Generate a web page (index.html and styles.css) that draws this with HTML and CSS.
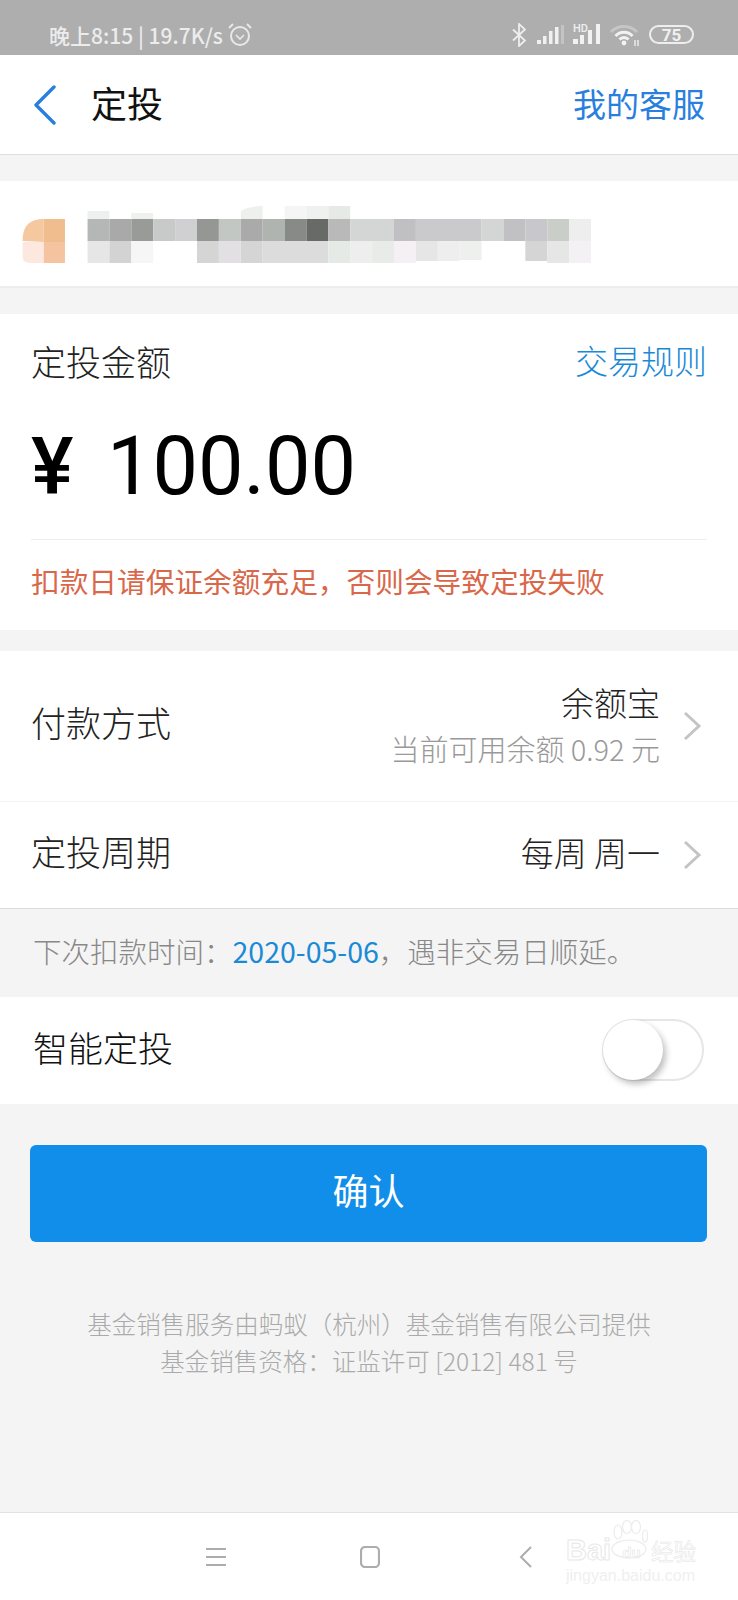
FILE: index.html
```html
<!DOCTYPE html>
<html lang="zh-CN">
<head>
  <meta charset="UTF-8">
  <meta name="viewport" content="width=device-width, initial-scale=1.0">
  <title>定投</title>
  <link rel="stylesheet" href="styles.css">
</head>
<body>
  <div class="page">

    <div class="status-bar">
      <div class="status-left">
        <span class="status-time">晚上8:15 | 19.7K/s</span>
        <svg class="alarm" width="24" height="25" viewBox="0 0 24 25" fill="none" stroke="#e8e8e8" stroke-width="2">
          <circle cx="12" cy="14" r="9"/>
          <path d="M8 13l4 4 4-4" stroke-width="1.6"/>
          <path d="M1 6l4-4M23 6l-4-4"/>
        </svg>
      </div>
      <div class="status-right">
        <svg class="bluetooth" width="14" height="24" viewBox="0 0 14 24" fill="none" stroke="#eeeeee" stroke-width="1.800">
          <path d="M1 6.500l12 11-6 5.500V1l6 5.500-12 11"/>
        </svg>
        <svg class="signal" width="27" height="20" viewBox="0 0 27 20" fill="#f0f0f0">
          <rect x="0" y="15" width="4" height="4"/>
          <rect x="6" y="11" width="3.500" height="8"/>
          <rect x="12" y="6" width="3.500" height="13"/>
          <rect x="18" y="2" width="3.500" height="17"/>
          <rect x="24" y="0" width="3" height="19" fill="#c4c4c4"/>
        </svg>
        <div class="hd-signal">
          <span class="hd">HD</span>
          <svg width="28" height="21" viewBox="0 0 28 21" fill="#f2f2f2">
            <rect x="0" y="15" width="5" height="5"/>
            <rect x="7" y="11" width="4" height="9"/>
            <rect x="15" y="6" width="4" height="14"/>
            <rect x="23" y="0" width="4" height="20"/>
          </svg>
        </div>
        <svg class="wifi" width="30" height="22" viewBox="0 0 30 22" fill="none" stroke-width="3">
          <path d="M1 8a18 18 0 0 1 26 0" stroke="#c6c6c6"/>
          <path d="M5.500 12a11.500 11.500 0 0 1 17 0" stroke="#f2f2f2"/>
          <path d="M9.500 15.500a6 6 0 0 1 9 0" stroke="#f2f2f2"/>
          <circle cx="14" cy="19" r="2.400" fill="#f2f2f2" stroke="none"/>
          <path d="M25 16v6M28 16v6" stroke="#eeeeee" stroke-width="1.400"/>
        </svg>
        <div class="battery"><span class="battery-num">75</span></div>
      </div>
    </div>

    <header class="app-bar">
      <div class="app-bar-left">
        <svg width="26" height="40" viewBox="0 0 26 40" fill="none" stroke="#2a7fde" stroke-width="3.400" stroke-linecap="round" stroke-linejoin="round">
          <path d="M22 2L4 20l18 18"/>
        </svg>
        <h1 class="page-title">定投</h1>
      </div>
      <a class="service-link">我的客服</a>
    </header>

    <section class="account-card">
      <svg width="591" height="64" viewBox="0 0 418.500 64" preserveAspectRatio="none">
        <path d="M16 40c0-12 3-22 15-22v23z" fill="#f5c8a0"/>
        <rect x="31" y="18" width="15" height="23" fill="#f0bd8e"/>
        <path d="M16 41h15v21H22q-6 0-6-6z" fill="#fde8df"/>
        <rect x="31" y="41" width="15" height="21" fill="#f4c4a0"/>
        <g>
          <rect x="62" y="10" width="15.500" height="8" fill="#edf0ee"/>
          <rect x="93" y="12" width="15.500" height="6" fill="#eef1ee"/>
          <path d="M170.500 18V10q4-4 15.500-5V18z" fill="#eef0ee"/>
          <rect x="201.500" y="5" width="15.500" height="13" fill="#f4f5f4"/>
          <rect x="217" y="5" width="15.500" height="13" fill="#eef1ef"/>
          <rect x="232.500" y="5" width="15.500" height="13" fill="#e6eae6"/>
        </g>
        <g>
          <rect x="62" y="18" width="15.500" height="22" fill="#b5b6b6"/>
          <rect x="77.500" y="18" width="15.500" height="22" fill="#a9a9aa"/>
          <rect x="93" y="18" width="15.500" height="22" fill="#999b99"/>
          <rect x="108.500" y="18" width="15.500" height="22" fill="#c8c9c9"/>
          <rect x="124" y="18" width="15.500" height="22" fill="#d0d0d2"/>
          <rect x="139.500" y="18" width="15.500" height="22" fill="#959795"/>
          <rect x="155" y="18" width="15.500" height="22" fill="#c3c7c3"/>
          <rect x="170.500" y="18" width="15.500" height="22" fill="#a9aaa9"/>
          <rect x="186" y="18" width="15.500" height="22" fill="#b0b4b0"/>
          <rect x="201.500" y="18" width="15.500" height="22" fill="#888a87"/>
          <rect x="217" y="18" width="15.500" height="22" fill="#676a66"/>
          <rect x="232.500" y="18" width="15.500" height="22" fill="#b8b9b8"/>
          <rect x="248" y="18" width="31" height="22" fill="#d4d5d5"/>
          <rect x="279" y="18" width="15.500" height="22" fill="#c0bfc2"/>
          <rect x="294.500" y="18" width="46.500" height="22" fill="#cac9cb"/>
          <rect x="341" y="18" width="15.500" height="22" fill="#d4d5d5"/>
          <rect x="356.500" y="18" width="15.500" height="22" fill="#c1c0c3"/>
          <rect x="372" y="18" width="15.500" height="22" fill="#c8c7cb"/>
          <rect x="387.500" y="18" width="15.500" height="22" fill="#c9cec9"/>
          <rect x="403" y="18" width="15.500" height="22" fill="#eeeeef"/>
        </g>
        <g>
          <rect x="62" y="40" width="15.500" height="22" fill="#e6e6e6"/>
          <rect x="77.500" y="40" width="15.500" height="22" fill="#d3d3d3"/>
          <rect x="93" y="40" width="15.500" height="22" fill="#f6f6f6"/>
          <rect x="139.500" y="40" width="15.500" height="22" fill="#d5d5d5"/>
          <rect x="155" y="40" width="15.500" height="22" fill="#e3e0e3"/>
          <rect x="170.500" y="40" width="15.500" height="22" fill="#d5d5d5"/>
          <rect x="186" y="40" width="46.500" height="22" fill="#dcdcdc"/>
          <rect x="232.500" y="40" width="15.500" height="22" fill="#e6eae6"/>
          <rect x="248" y="40" width="15.500" height="22" fill="#eeeeee"/>
          <rect x="263.500" y="40" width="15.500" height="22" fill="#e8ebe8"/>
          <rect x="279" y="40" width="15.500" height="22" fill="#f4f0f4"/>
          <rect x="294.500" y="40" width="15.500" height="20" fill="#e6e6e6"/>
          <rect x="310" y="40" width="15.500" height="20" fill="#eeeeee"/>
          <rect x="325.500" y="40" width="15.500" height="19" fill="#eef0ee"/>
          <rect x="372" y="40" width="15.500" height="20" fill="#d5d5d5"/>
          <rect x="387.500" y="40" width="15.500" height="22" fill="#e6e6e6"/>
          <rect x="403" y="40" width="15.500" height="22" fill="#f3f1f4"/>
        </g>
      </svg>
    </section>

    <section class="amount-card">
      <div class="amount-head">
        <span class="amount-label">定投金额</span>
        <a class="rules-link">交易规则</a>
      </div>
      <div class="amount-value">
        <span class="yen">¥</span>
        <span class="digits">100.00</span>
      </div>
      <p class="warning">扣款日请保证余额充足，否则会导致定投失败</p>
    </section>

    <section class="options">
      <div class="option option-pay">
        <span class="option-label">付款方式</span>
        <div class="option-side">
          <div class="option-values">
            <div class="option-main">余额宝</div>
            <div class="option-sub">当前可用余额 0.92 元</div>
          </div>
          <svg class="chevron" width="20" height="30" viewBox="0 0 20 30" fill="none" stroke="#c4c4c4" stroke-width="3">
            <path d="M3 2l14 13L3 28"/>
          </svg>
        </div>
      </div>
      <div class="option option-cycle">
        <span class="option-label">定投周期</span>
        <div class="option-side">
          <div class="option-main">每周 周一</div>
          <svg class="chevron" width="20" height="30" viewBox="0 0 20 30" fill="none" stroke="#c4c4c4" stroke-width="3">
            <path d="M3 2l14 13L3 28"/>
          </svg>
        </div>
      </div>
    </section>

    <p class="next-date">下次扣款时间：<span class="date">2020-05-06</span>，遇非交易日顺延。</p>

    <section class="smart-row">
      <span class="smart-label">智能定投</span>
      <div class="switch"><div class="switch-knob"></div></div>
    </section>

    <div class="submit-wrap">
      <button class="submit">确认</button>
    </div>

    <footer class="legal">
      <p>基金销售服务由蚂蚁（杭州）基金销售有限公司提供</p>
      <p>基金销售资格：证监许可 [2012] 481 号</p>
    </footer>

    <nav class="nav-bar">
      <svg class="nav-menu" width="20" height="18" viewBox="0 0 20 18" fill="none" stroke="#adadad" stroke-width="2">
        <path d="M0 1h20M0 9h20M0 17h20"/>
      </svg>
      <svg class="nav-home" width="20" height="22" viewBox="0 0 20 22" fill="none" stroke="#adadad" stroke-width="2.200">
        <rect x="1" y="1" width="18" height="20" rx="4"/>
      </svg>
      <svg class="nav-back" width="14" height="22" viewBox="0 0 14 22" fill="none" stroke="#adadad" stroke-width="2">
        <path d="M12 1L2 11l10 10"/>
      </svg>
    </nav>

    <div class="watermark">
      <svg class="paw" width="82" height="40" viewBox="0 0 82 40" fill="none" stroke="#ececec" stroke-width="1.200">
        <ellipse cx="52" cy="12" rx="4" ry="7"/>
        <ellipse cx="61" cy="7" rx="4.500" ry="6.500"/>
        <ellipse cx="70" cy="7" rx="4.500" ry="6.500"/>
        <ellipse cx="79" cy="16" rx="2.500" ry="6"/>
        <ellipse cx="63" cy="29" rx="17" ry="9"/>
      </svg>
      <div class="wm-top"><span class="wm-bai">Bai</span><span class="wm-du">du</span><span class="wm-cn">经验</span></div>
      <div class="wm-url">jingyan.baidu.com</div>
    </div>

  </div>
</body>
</html>
```

FILE: styles.css
```css
* {
  box-sizing: border-box;
}

body {
  margin: 0;
  background-color: #f4f4f4;
  font-family: "Noto Sans CJK SC", "Noto Sans", sans-serif;
  font-weight: 300;
  color: #222;
}

p,
h1 {
  margin: 0;
  font-weight: 300;
}

.page {
  position: relative;
  width: 738px;
  height: 1600px;
  display: flex;
  flex-direction: column;
  overflow: hidden;
}

/* status bar */
.status-bar {
  height: 55px;
  flex: none;
  background-color: #aeaeae;
  display: flex;
  justify-content: space-between;
  align-items: center;
  padding: 14px 44px 0 49px;
}

.status-left,
.status-right {
  display: flex;
  align-items: center;
}

.status-time {
  font-size: 21px;
  font-weight: 500;
  color: #ececec;
}

.alarm {
  margin-left: 5px;
}

.status-right {
  gap: 9px;
}

.bluetooth {
  margin-right: 2px;
}

.hd-signal {
  position: relative;
  height: 21px;
}

.hd-signal svg {
  display: block;
}

.hd {
  position: absolute;
  left: 0;
  top: -1px;
  font-family: "Roboto", sans-serif;
  font-weight: 500;
  font-size: 11px;
  line-height: 11px;
  color: #eeeeee;
}

.battery {
  width: 45px;
  height: 19px;
  border: 2px solid #eeeeee;
  border-radius: 10px;
  display: flex;
  align-items: center;
  justify-content: center;
}

.battery-num {
  font-family: "Roboto", sans-serif;
  font-size: 17px;
  font-weight: 700;
  color: #f0f0f0;
}

/* top bar */
.app-bar {
  height: 100px;
  flex: none;
  background-color: #fff;
  border-bottom: 1px solid #dedede;
  display: flex;
  justify-content: space-between;
  align-items: center;
  padding: 0 33px 0 32px;
}

.app-bar-left {
  display: flex;
  align-items: center;
  gap: 33px;
}

.page-title {
  font-size: 36px;
  font-weight: 400;
  line-height: 50px;
  padding-bottom: 6px;
  color: #111;
}

.service-link {
  font-size: 33px;
  font-weight: 400;
  padding-bottom: 4px;
  color: #2a7fde;
}

/* masked account */
.account-card {
  height: 107px;
  flex: none;
  margin-top: 26px;
  background-color: #fff;
  border-bottom: 2px solid #ececec;
  padding-top: 20px;
}

.account-card svg {
  display: block;
}

/* amount */
.amount-card {
  height: 316px;
  flex: none;
  margin-top: 26px;
  background-color: #fff;
  padding: 0 31px;
}

.amount-head {
  height: 96px;
  display: flex;
  justify-content: space-between;
  align-items: center;
  padding-bottom: 4px;
}

.amount-label {
  font-size: 35px;
  color: #222;
}

.rules-link {
  font-size: 33px;
  color: #1a8ad6;
}

.amount-value {
  height: 130px;
  display: flex;
  align-items: center;
  padding-bottom: 16px;
  border-bottom: 1px solid #eeeeee;
  font-family: "Roboto", sans-serif;
  font-weight: 400;
  color: #000;
}

.yen {
  font-size: 80px;
  font-weight: 500;
  width: 76px;
}

.digits {
  font-size: 81px;
}

.warning {
  font-size: 28.700px;
  font-weight: 400;
  line-height: 82px;
  color: #d9674a;
}

/* payment options */
.options {
  flex: none;
  margin-top: 21px;
  background-color: #fff;
  border-bottom: 1px solid #dddddd;
}

.option {
  display: flex;
  justify-content: space-between;
  align-items: center;
  padding: 0 36px 0 31px;
}

.option-pay {
  height: 151px;
  border-bottom: 1px solid #f2f2f2;
}

.option-cycle {
  height: 106px;
}

.option-label {
  font-size: 35px;
  padding-bottom: 9px;
  color: #222;
}

.option-side {
  display: flex;
  align-items: center;
  gap: 22px;
}

.option-side > .option-main {
  padding-bottom: 7px;
}

.option-values {
  text-align: right;
  padding-bottom: 7px;
}

.option-main {
  font-size: 33px;
  line-height: 50px;
  color: #222;
}

.option-sub {
  font-size: 29px;
  line-height: 42px;
  color: #999;
}

.next-date {
  height: 88px;
  flex: none;
  padding-left: 33px;
  font-size: 28.500px;
  line-height: 84px;
  color: #888;
}

.date {
  font-weight: 400;
  color: #1a8ad6;
}

/* smart plan */
.smart-row {
  height: 107px;
  flex: none;
  background-color: #fff;
  display: flex;
  justify-content: space-between;
  align-items: center;
  padding: 0 34px 0 33px;
}

.smart-label {
  font-size: 35px;
  padding-bottom: 8px;
  color: #111;
}

.switch {
  width: 102px;
  height: 62px;
  border: 2px solid #e6e6e6;
  border-radius: 31px;
  margin-top: -2px;
}

.switch-knob {
  width: 60px;
  height: 60px;
  margin: -1px 0 0 -1px;
  background-color: #fff;
  border-radius: 50%;
  box-shadow: 3px 4px 6px rgba(0, 0, 0, 0.25);
}

/* button */
.submit-wrap {
  flex: none;
  padding: 41px 31px 0 30px;
}

.submit {
  display: block;
  width: 100%;
  height: 97px;
  border: 0;
  border-radius: 6px;
  padding: 0 0 10px;
  background-color: #108ee9;
  color: #fff;
  font-family: inherit;
  font-weight: 400;
  font-size: 36px;
}

/* legal text */
.legal {
  flex: none;
  margin-top: 63px;
  text-align: center;
  font-size: 24.500px;
  line-height: 37px;
  color: #aaaaaa;
}

/* system navigation */
.nav-bar {
  position: absolute;
  left: 0;
  right: 0;
  bottom: 0;
  height: 88px;
  background-color: #fff;
  border-top: 1px solid #e2e2e2;
  display: flex;
  align-items: center;
  padding-left: 206px;
}

.nav-menu {
  margin-right: 134px;
}

.nav-home {
  margin-right: 139px;
}

/* photo watermark */
.watermark {
  position: absolute;
  left: 566px;
  top: 1518px;
  width: 134px;
  color: #efefef;
  font-family: "Liberation Sans", sans-serif;
}

.paw {
  position: absolute;
  left: 0;
  top: 2px;
}

.wm-top {
  margin-top: 18px;
  display: flex;
  align-items: center;
  height: 28px;
  font-weight: bold;
  color: #fff;
  -webkit-text-stroke: 1px #e8e8e8;
}

.wm-bai {
  font-size: 29px;
  width: 46px;
}

.wm-du {
  font-size: 15px;
  width: 39px;
  padding-top: 4px;
  text-align: center;
  -webkit-text-stroke: 0.5px #e2e2e2;
}

.wm-cn {
  font-family: "Noto Sans CJK SC", sans-serif;
  font-size: 22.500px;
  font-weight: normal;
  -webkit-text-stroke: 0.5px #e4e4e4;
}

.wm-url {
  margin-top: 3px;
  font-size: 16px;
  line-height: 18px;
  color: #efefef;
}
```
